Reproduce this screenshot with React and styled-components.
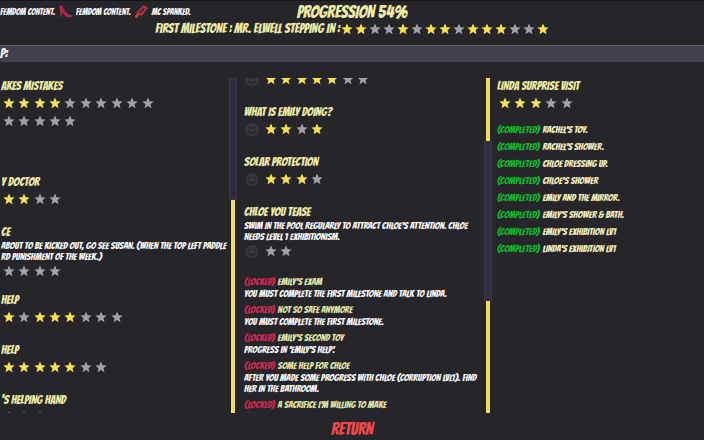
import React from "react";
import styled, { createGlobalStyle } from "styled-components";

// "y" is an earned star, "g" is one still missing
const milestoneStars = "yyggygyygyyyggy";

const mainQuests = [
  { title: "akes mistakes", rows: ["yyyygggggg", "ggggg"], space: 44 },
  { title: "y Doctor", rows: ["yygg"] },
  {
    title: "ce",
    lines: ["about to be kicked out, go see Susan. (When the top left paddle", "rd punishment of the week.)"],
    rows: ["gggg"],
  },
  { title: "Help", rows: ["ygyyyggg"] },
  { title: "Help", rows: ["yyyyygg"] },
  { title: "'s helping hand", rows: ["ggg"] },
];

const sideQuests = [
  { rows: ["yyyyygg"] },
  { title: "What is Emily doing?", rows: ["yygy"] },
  { title: "Solar protection", rows: ["yyyg"] },
  {
    title: "Chloe you tease",
    lines: ["Swim in the pool regularly to attract Chloe's attention. Chloe", "needs level 1 exhibitionism."],
    rows: ["gg"],
  },
];

const lockedQuests = [
  { title: "Emily's exam", lines: ["You must complete the first milestone and talk to Linda."] },
  { title: "Not so safe anymore", lines: ["You must complete the first milestone."] },
  { title: "Emily's second toy", lines: ["Progress in 'Emily's help'."] },
  {
    title: "Some help for Chloe",
    lines: ["After you made some progress with Chloe (corruption lvl1). Find", "her in the bathroom."],
  },
  { title: "A sacrifice I'm willing to make", lines: ["After 60% drinks."] },
];

const completedQuests = [
  "Rachel's toy.",
  "Rachel's shower.",
  "Chloe dressing up.",
  "Chloe's shower",
  "Emily and the mirror.",
  "Emily's shower & bath.",
  "Emily's exhibition lv1",
  "Linda's exhibition lv1",
];

const Star = ({ on }) => (
  <StarIcon viewBox="0 0 24 24" $on={on} aria-hidden="true">
    <path d="M12 1l3.2 7.4 8 .7-6.100 5.300 1.900 7.900L12 18.100 5 22.300l1.900-7.900L.8 9.100l8-.7z" />
  </StarIcon>
);

const Stars = ({ value }) => value.split("").map((s, i) => <Star key={i} on={s === "y"} />);

const Smiley = () => (
  <SmileyIcon viewBox="0 0 24 24" aria-hidden="true">
    <circle cx="12" cy="13" r="10" fill="#37383d" />
    <circle cx="8" cy="10" r="1.800" fill="#25252a" />
    <path d="M13.500 10.500h4.500M6 14.500c1.500 5 10.500 5 12 0" fill="none" stroke="#25252a" strokeWidth="2" />
  </SmileyIcon>
);

const HeelIcon = () => (
  <BadgeIcon viewBox="0 0 24 24" aria-hidden="true">
    <path d="M2 0c4 1 6 5 8 9 3 5 6 8 12 9 2 .5 3 4 1 4.500-6 1-11-.5-14-5L6.500 13 5 22H3L2 10C0 7 0 2 2 0z" fill="#b3224e" />
  </BadgeIcon>
);

const PaddleIcon = () => (
  <BadgeIcon viewBox="0 0 24 24" aria-hidden="true">
    <path d="M16 2l6 4-10 12-5-1-4 6-2-1 4-7 1-3z" fill="none" stroke="#d63a42" strokeWidth="2.500" />
    <path d="M16 6l2 2M12 10l2 2M9 13l2 2" stroke="#d63a42" strokeWidth="2" />
  </BadgeIcon>
);

const Quest = ({ quest, smiley }) => (
  <QuestBox $space={quest.space || (quest.lines ? 12 : 16)}>
    {quest.title && <QuestTitle>{quest.title}</QuestTitle>}
    {quest.lines && quest.lines.map((line) => <Description key={line}>{line}</Description>)}
    {quest.rows.map((row, i) => (
      <StarLine key={i}>
        {smiley && <Smiley />}
        <StarGrid>
          <Stars value={row} />
        </StarGrid>
      </StarLine>
    ))}
  </QuestBox>
);

function App() {
  return (
    <>
      <GlobalStyle />
      <Page>
        <Header>
          <Badges>
            <span>Femdom content.</span>
            <HeelIcon />
            <span>Femdom content.</span>
            <PaddleIcon />
            <span>MC spanked.</span>
          </Badges>
          <Title>Progression 54%</Title>
        </Header>
        <Milestone>
          First milestone : Mr. Elwell stepping in :
          <MilestoneStars>
            <Stars value={milestoneStars} />
          </MilestoneStars>
        </Milestone>
        <SectionBar>P:</SectionBar>
        <Columns>
          <Column $left={1} $right={7}>
            {mainQuests.map((quest, i) => (
              <Quest key={i} quest={quest} />
            ))}
          </Column>
          <Scrollbar>
            <Track $size={121} />
            <Thumb $size={214} />
          </Scrollbar>
          <Column $left={7} $right={0} $scrolled>
            {sideQuests.map((quest, i) => (
              <Quest key={i} quest={quest} smiley />
            ))}
            <LockedList>
              {lockedQuests.map((quest) => (
                <li key={quest.title}>
                  <ListTitle>
                    <Status $color="#d3264f">(Locked)</Status> {quest.title}
                  </ListTitle>
                  {quest.lines.map((line) => (
                    <Description key={line}>{line}</Description>
                  ))}
                </li>
              ))}
            </LockedList>
          </Column>
          <Scrollbar>
            <Thumb $size={63} />
            <Track $size={159} />
            <Thumb $size={113} />
          </Scrollbar>
          <Column $left={5} $right={0}>
            <Quest quest={{ title: "Linda surprise visit", rows: ["yyygg"], space: 9 }} />
            <CompletedList>
              {completedQuests.map((name) => (
                <CompletedItem key={name}>
                  <Status $color="#12b52a">(Completed)</Status> {name}
                </CompletedItem>
              ))}
            </CompletedList>
          </Column>
        </Columns>
        <Footer>
          <ReturnButton type="button">Return</ReturnButton>
        </Footer>
      </Page>
    </>
  );
}

export default App;

const GlobalStyle = createGlobalStyle`
  * {
    box-sizing: border-box;
  }

  body {
    margin: 0;
    background: #25252a;
    color: #f4f4f2;
    font-family: Bangers, "Open Sans Condensed", "Liberation Sans", sans-serif;
    font-weight: 400;
    text-transform: uppercase;
    overflow: hidden;
  }
`;

const Page = styled.div`
  display: flex;
  flex-direction: column;
  height: 100vh;
  border-top: 1px solid #151518;
`;

const Header = styled.header`
  display: grid;
  grid-template-columns: 1fr auto 1fr;
  align-items: center;
  height: 21px;
`;

const Badges = styled.div`
  display: flex;
  align-items: center;
  gap: 4px;
  font-size: 9px;
  white-space: nowrap;
`;

const BadgeIcon = styled.svg`
  width: 13px;
  height: 13px;
`;

const Title = styled.h1`
  margin: 0;
  color: #eeeaa6;
  font-size: 17px;
  font-weight: 400;
  line-height: 20px;
`;

const Milestone = styled.div`
  display: flex;
  align-items: center;
  justify-content: center;
  gap: 1px;
  height: 13px;
  color: #eeeaa6;
  font-size: 13px;
  white-space: nowrap;
`;

const MilestoneStars = styled.span`
  display: flex;
  gap: 2px;
`;

const StarIcon = styled.svg`
  flex: none;
  width: 12px;
  height: 12px;
  fill: ${props => props.$on ? "#fbe04e" : "#a0a0a8"};
`;

const SectionBar = styled.div`
  height: 17px;
  margin-top: 10px;
  background: #43414d;
  border-top: 1px solid #63626c;
  font-size: 13px;
  line-height: 16px;
`;

const Columns = styled.main`
  flex: 1;
  display: grid;
  grid-template-columns: 229fr 8px 247fr 8px 212fr;
  grid-template-rows: minmax(0, 1fr);
  min-height: 0;
  margin-top: 16px;
`;

const Column = styled.section`
  min-width: 0;
  overflow: hidden;
  padding: 0 ${props => props.$right}px 0 ${props => props.$left}px;
  white-space: nowrap;

  & > :first-child {
    margin-top: ${props => props.$scrolled ? "-8px" : "0"};
  }
`;

const Scrollbar = styled.div`
  display: flex;
  flex-direction: column;
  align-items: center;
`;

const Track = styled.div`
  flex: ${props => props.$size};
  width: 8px;
  background: #2c2d40;
  border: 1px solid #38394a;
`;

const Thumb = styled.div`
  flex: ${props => props.$size};
  width: 4px;
  background: #f3d95c;
`;

const QuestBox = styled.article`
  margin-bottom: ${props => props.$space}px;
`;

const QuestTitle = styled.h2`
  margin: 0;
  color: #eeeaa6;
  font-size: 12px;
  font-weight: 400;
  line-height: 16px;
`;

const Description = styled.p`
  margin: 0;
  font-size: 10px;
  line-height: 11px;
`;

const StarLine = styled.div`
  display: flex;
  align-items: center;
  gap: 3px;
  height: 18px;
`;

const SmileyIcon = styled.svg`
  flex: none;
  width: 16px;
  height: 16px;
`;

const StarGrid = styled.div`
  flex: 1;
  display: grid;
  grid-template-columns: repeat(auto-fill, minmax(15px, 1fr));
  justify-items: center;
  padding-right: 5px;
`;

const LockedList = styled.ul`
  list-style: none;
  margin: 0;
  padding: 3px 0 0;

  li {
    margin-bottom: 4px;
  }
`;

const ListTitle = styled.h3`
  margin: 0;
  color: #dfe0a4;
  font-size: 10px;
  font-weight: 400;
  line-height: 13px;
`;

const Status = styled.span`
  margin-right: 1px;
  color: ${props => props.$color};
`;

const CompletedList = styled.ul`
  list-style: none;
  margin: 0;
  padding: 0;
`;

const CompletedItem = styled.li`
  color: #eeeaba;
  font-size: 10px;
  line-height: 17px;
`;

const Footer = styled.footer`
  display: flex;
  align-items: center;
  justify-content: center;
  height: 27px;
  padding-top: 4px;
`;

const ReturnButton = styled.button`
  padding: 0;
  border: 0;
  background: none;
  color: #f0484b;
  font: inherit;
  font-size: 17px;
  text-transform: uppercase;
  cursor: pointer;
`;
